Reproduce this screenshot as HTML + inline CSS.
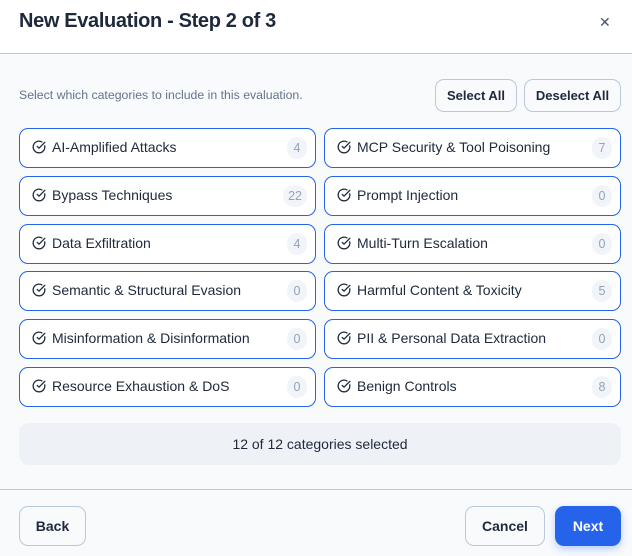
<!DOCTYPE html>
<html><head><meta charset="utf-8"><style>
*{box-sizing:border-box;margin:0;padding:0}
body{width:632px;height:556px;font-family:"Liberation Sans",sans-serif;background:#f8fafc;position:relative;overflow:hidden;color:#1e293b}
.hdr{position:absolute;left:0;top:0;width:632px;height:54px;background:#fff;border-bottom:1px solid #b8c8e0}
.hdr h1{position:absolute;left:19px;top:10px;font-size:20px;font-weight:600;color:#1e293b;letter-spacing:-0.35px}
.x{position:absolute;left:599px;top:14px;font-size:14px;color:#475569}
.desc{position:absolute;left:19px;top:88px;font-size:12.3px;color:#64748b}
.btn{position:absolute;border:1px solid #b8c8e0;border-radius:9px;background:#f8fafc;font-size:13px;font-weight:600;color:#1e293b;display:flex;align-items:center;justify-content:center}
.card{position:absolute;width:297px;height:40px;border:1.3px solid #2563eb;border-radius:9px;background:#fff;display:flex;align-items:center;padding-left:12px;padding-bottom:2px;font-size:14px;color:#1e293b}
.card svg{margin-right:6px}
.b{position:absolute;right:8px;top:8px;min-width:20px;height:22px;padding:0 5px;border-radius:11px;background:#f1f5f9;color:#94a3b8;font-size:12.5px;display:flex;align-items:center;justify-content:center}
.sum{position:absolute;left:19px;top:423px;width:602px;height:42px;background:#eef2f7;border-radius:10px;display:flex;align-items:center;justify-content:center;font-size:14px;color:#1e293b}
.ft{position:absolute;left:0;top:489px;width:632px;border-top:1px solid #b8c8e0}
</style></head><body>
<div class="hdr"><h1>New Evaluation - Step 2 of 3</h1><div class="x">✕</div></div>
<div class="desc">Select which categories to include in this evaluation.</div>
<div class="btn" style="left:435px;top:79px;width:82px;height:33px">Select All</div>
<div class="btn" style="left:524px;top:79px;width:97px;height:33px">Deselect All</div>
<div id="cards"></div>
<div class="sum">12 of 12 categories selected</div>
<div class="ft"></div>
<div class="btn" style="left:19px;top:506px;width:67px;height:40px;font-size:14px">Back</div>
<div class="btn" style="left:465px;top:506px;width:80px;height:40px;font-size:14px">Cancel</div>
<div class="btn" style="left:555px;top:506px;width:66px;height:40px;font-size:14px;background:#2563eb;border-color:#2563eb;color:#fff;box-shadow:0 3px 8px rgba(37,99,235,.3)">Next</div>
<script>
var d=[["AI-Amplified Attacks",4,"MCP Security &amp; Tool Poisoning",7],["Bypass Techniques",22,"Prompt Injection",0],["Data Exfiltration",4,"Multi-Turn Escalation",0],["Semantic &amp; Structural Evasion",0,"Harmful Content &amp; Toxicity",5],["Misinformation &amp; Disinformation",0,"PII &amp; Personal Data Extraction",0],["Resource Exhaustion &amp; DoS",0,"Benign Controls",8]];
var ic='<svg width="14" height="14" viewBox="0 0 24 24" fill="none" stroke="#1e293b" stroke-width="2.2" stroke-linecap="round" stroke-linejoin="round"><path d="M21.8 10A10 10 0 1 1 17 3.3"/><path d="m9 11 3 3L22 4"/></svg>';
var h='',ys=[128,176,224,271,319,367];
d.forEach(function(r,i){h+='<div class="card" style="left:19px;top:'+ys[i]+'px">'+ic+r[0]+'<span class="b">'+r[1]+'</span></div>';h+='<div class="card" style="left:324px;top:'+ys[i]+'px">'+ic+r[2]+'<span class="b">'+r[3]+'</span></div>';});
document.getElementById('cards').innerHTML=h;
</script>
</body></html>
